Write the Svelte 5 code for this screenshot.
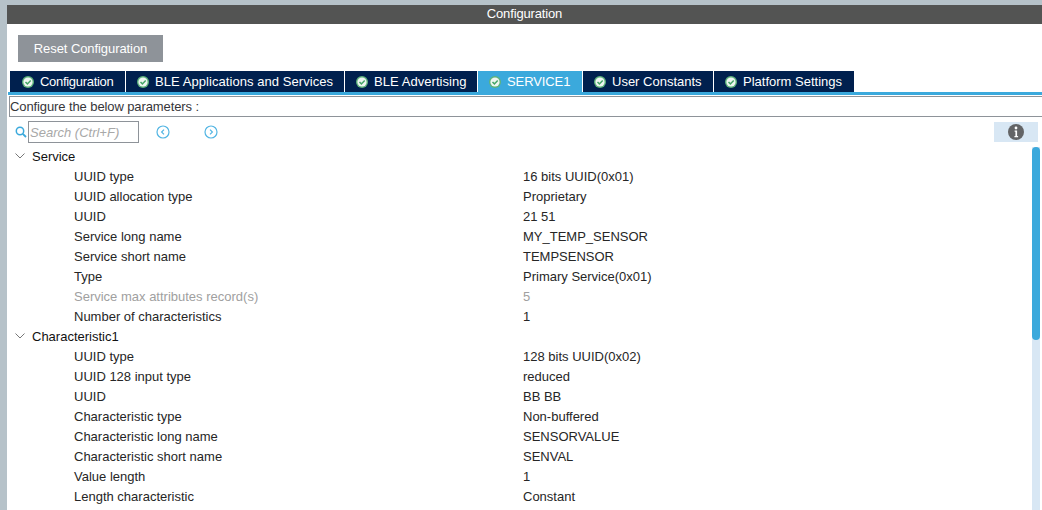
<script>
  const tabs = [
    { label: 'Configuration', w: 115, ls: -0.3 },
    { label: 'BLE Applications and Services', w: 218, ls: 0.06 },
    { label: 'BLE Advertising', w: 132, ls: 0.05 },
    { label: 'SERVICE1', w: 104, ls: -0.1, active: true },
    { label: 'User Constants', w: 130, ls: 0 },
    { label: 'Platform Settings', w: 140, ls: 0 }
  ];
  const groups = [
    { name: 'Service', rows: [
      ['UUID type', '16 bits UUID(0x01)'],
      ['UUID allocation type', 'Proprietary'],
      ['UUID', '21 51'],
      ['Service long name', 'MY_TEMP_SENSOR'],
      ['Service short name', 'TEMPSENSOR'],
      ['Type', 'Primary Service(0x01)'],
      ['Service max attributes record(s)', '5', true],
      ['Number of characteristics', '1']
    ]},
    { name: 'Characteristic1', rows: [
      ['UUID type', '128 bits UUID(0x02)'],
      ['UUID 128 input type', 'reduced'],
      ['UUID', 'BB BB'],
      ['Characteristic type', 'Non-buffered'],
      ['Characteristic long name', 'SENSORVALUE'],
      ['Characteristic short name', 'SENVAL'],
      ['Value length', '1'],
      ['Length characteristic', 'Constant']
    ]}
  ];
</script>

<div class="window">
  <header class="title">Configuration</header>
  <main class="body">
    <div class="actions"><button class="reset">Reset Configuration</button></div>
    <nav class="tabs">
      {#each tabs as t}
        <div class="tab" class:active={t.active} style="width:{t.w}px;letter-spacing:{t.ls}px">
          <svg class="check" viewBox="0 0 12 12" width="12" height="12">
            <circle cx="6" cy="6" r="6" fill="#5fb47c" />
            <circle cx="6" cy="6" r="4.600" fill="#eef6f1" />
            <path d="M3.500 6l1.900 1.900L8.700 4.500" fill="none" stroke="#45a567" stroke-width="1.500" />
          </svg>
          <span>{t.label}</span>
        </div>
      {/each}
    </nav>
    <div class="rule"></div>
    <div class="hint">Configure the below parameters :</div>
    <div class="searchbar">
      <svg class="glass" viewBox="0 0 12 12" width="12" height="12">
        <circle cx="5" cy="5" r="3.700" fill="none" stroke="#3ba9dc" stroke-width="1.500" />
        <path d="M7.800 7.800L11 11" stroke="#3ba9dc" stroke-width="1.800" />
      </svg>
      <div class="search">Search (Ctrl+F)</div>
      <svg class="nav prev" viewBox="0 0 14 14" width="14" height="14">
        <circle cx="7" cy="7" r="6" fill="none" stroke="#52b5e3" stroke-width="1.200" />
        <path d="M8 4.600L5.600 7 8 9.400" fill="none" stroke="#52b5e3" stroke-width="1.200" />
      </svg>
      <svg class="nav next" viewBox="0 0 14 14" width="14" height="14">
        <circle cx="7" cy="7" r="6" fill="none" stroke="#52b5e3" stroke-width="1.200" />
        <path d="M6 4.600L8.400 7 6 9.400" fill="none" stroke="#52b5e3" stroke-width="1.200" />
      </svg>
      <div class="info">
        <svg viewBox="0 0 16 16" width="16" height="16">
          <circle cx="8" cy="8" r="8" fill="#636466" />
          <circle cx="8" cy="4" r="1.400" fill="#fff" />
          <path d="M6.600 6.600h2.500v5.400h1v1.200H6.400V12h1V7.800h-.8z" fill="#fff" />
        </svg>
      </div>
    </div>
    <div class="content">
      <div class="tree">
        {#each groups as g}
          <div class="row group">
            <svg class="chev" viewBox="0 0 10 6" width="10" height="6">
              <path d="M.5.500L5 5 9.500.500" fill="none" stroke="#777" stroke-width="1" />
            </svg>
            <span>{g.name}</span>
          </div>
          {#each g.rows as r}
            <div class="row" class:muted={r[2]}>
              <span class="key">{r[0]}</span>
              <span class="val">{r[1]}</span>
            </div>
          {/each}
        {/each}
      </div>
      <div class="track"><div class="thumb"></div></div>
    </div>
  </main>
</div>

<style>
  :global(body) { margin: 0; }
  .window {
    height: 510px;
    overflow: hidden;
    box-sizing: border-box;
    padding: 5px 0 0 7px;
    background: #b6c2c9;
    display: flex;
    flex-direction: column;
    font-family: "Liberation Sans", Arial, sans-serif;
    font-size: 13px;
    color: #262626;
  }
  .title {
    height: 19px;
    flex: none;
    background: #535453;
    color: #fff;
    text-align: center;
    line-height: 18px;
    letter-spacing: -0.15px;
  }
  .body {
    flex: 1;
    min-height: 0;
    background: #fff;
    display: flex;
    flex-direction: column;
  }
  .actions { padding: 11px 0 9px 11px; }
  .reset {
    display: block;
    width: 145px;
    height: 27px;
    border: 0;
    padding: 0;
    background: #8e9399;
    color: #fff;
    font: inherit;
    letter-spacing: -0.08px;
  }
  .tabs { display: flex; padding-left: 3px; gap: 1px; height: 21px; flex: none; }
  .tab {
    box-sizing: border-box;
    background: #00204e;
    color: #fff;
    display: flex;
    align-items: center;
    padding-left: 11px;
    gap: 6px;
  }
  .tab:first-child { padding-left: 12px; }
  .tab.active { background: #3ba9dc; }
  .check { flex: none; }
  .rule { height: 3px; margin-left: 1px; background: #3ba9dc; flex: none; }
  .hint {
    box-sizing: border-box;
    height: 21px;
    margin: 1px 0 0 2px;
    border: 1px solid #8e9399;
    border-right: 0;
    padding: 0;
    line-height: 19px;
    color: #36363a;
    letter-spacing: -0.1px;
    flex: none;
  }
  .searchbar {
    display: flex;
    align-items: center;
    height: 20px;
    margin-top: 5px;
    padding-left: 8px;
    flex: none;
  }
  .search {
    box-sizing: border-box;
    width: 111px;
    height: 22px;
    margin-left: 1px;
    border: 1px solid #8e9399;
    color: #a8a8a8;
    font-style: italic;
    line-height: 20px;
    padding: 1px 0 0 1px;
  }
  .nav.prev { margin-left: 17px; }
  .nav.next { margin-left: 34px; }
  .info {
    margin-left: auto;
    margin-right: 4px;
    width: 44px;
    height: 20px;
    background: #d8e7f4;
    display: flex;
    align-items: center;
    justify-content: center;
  }
  .content { flex: 1; min-height: 0; display: flex; margin-top: 4px; overflow: hidden; }
  .tree { flex: 1; min-width: 0; }
  .row {
    display: flex;
    align-items: center;
    height: 20px;
    padding-left: 67px;
  }
  .row.group { padding-left: 8px; color: #111; }
  .chev { flex: none; margin-right: 7px; }
  .key { width: 449px; flex: none; }
  .muted { color: #a0a0a0; }
  .track { width: 8px; flex: none; margin-right: 2px; background: #d8e7f4; margin-top: 1px; }
  .thumb { height: 193px; background: #3ba9dc; border-radius: 4px; }
</style>
